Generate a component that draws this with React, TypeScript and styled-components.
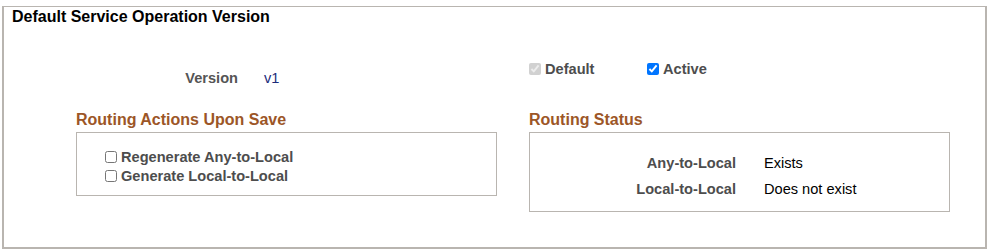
import React from "react";
import styled, { createGlobalStyle } from "styled-components";

const Global = createGlobalStyle`
  html, body { margin: 0; padding: 0; background: #fff; }
  body { font-family: "Liberation Sans", Arial, sans-serif; font-size: 14.6px; color: #000; }
`;

const Frame = styled.section`
  box-sizing: border-box;
  margin: 6px 0 0 2px;
  width: 985px;
  height: 243px;
  border: 1px solid #b9b5b0;
  border-left-width: 2px;
  border-right-width: 2px;
  border-bottom-width: 2px;
  padding: 0 0 0 8px;
`;

const Title = styled.h2`
  margin: 0;
  font-size: 16px;
  font-weight: bold;
  line-height: 20px;
  color: #000;
`;

const Columns = styled.div`
  display: grid;
  grid-template-columns: 421px 421px;
  column-gap: 32px;
  margin-left: 64px;
`;

const TopLeft = styled.div`
  display: flex;
  align-items: center;
  padding-top: 43px;
`;

const FieldLabel = styled.span`
  width: 162px;
  text-align: right;
  font-weight: bold;
  color: #555;
  line-height: 16px;
`;

const FieldValue = styled.span`
  margin-left: 26px;
  color: #1c2b7a;
  line-height: 16px;
`;

const TopRight = styled.div`
  display: flex;
  align-items: center;
  padding-top: 25px;
`;

const CheckLabel = styled.label<{ $width?: number }>`
  display: inline-flex;
  align-items: center;
  font-weight: bold;
  color: #4d4d4d;
  line-height: 16px;
  width: ${(p) => (p.$width ? `${p.$width}px` : "auto")};
`;

const Box = styled.input`
  width: 12px;
  height: 12px;
  margin: 0 4px 0 0;
`;

const Section = styled.div`
  display: flex;
  flex-direction: column;
  padding-top: 25px;
`;

const SectionHeading = styled.h3`
  margin: 0 0 3px 0;
  font-size: 16px;
  line-height: 18px;
  font-weight: bold;
  color: #9c5627;
`;

const Panel = styled.div<{ $height: number }>`
  box-sizing: border-box;
  height: ${(p) => p.$height}px;
  border: 1px solid #b9b5b0;
`;

const ActionList = styled.div`
  display: flex;
  flex-direction: column;
  gap: 3px;
  padding: 16px 0 0 28px;
`;

const StatusGrid = styled.div`
  display: grid;
  grid-template-columns: 206px auto;
  column-gap: 28px;
  row-gap: 10px;
  padding-top: 22px;
`;

const StatusLabel = styled.span`
  text-align: right;
  font-weight: bold;
  color: #4d4d4d;
  line-height: 16px;
`;

const StatusValue = styled.span`
  color: #000;
  line-height: 16px;
`;

export default function App() {
  return (
    <>
      <Global />
      <Frame>
        <Title>Default Service Operation Version</Title>
        <Columns>
          <TopLeft>
            <FieldLabel>Version</FieldLabel>
            <FieldValue>v1</FieldValue>
          </TopLeft>
          <TopRight>
            <CheckLabel $width={118}>
              <Box type="checkbox" checked disabled readOnly />
              Default
            </CheckLabel>
            <CheckLabel>
              <Box type="checkbox" checked readOnly />
              Active
            </CheckLabel>
          </TopRight>
          <Section>
            <SectionHeading>Routing Actions Upon Save</SectionHeading>
            <Panel $height={64}>
              <ActionList>
                <CheckLabel>
                  <Box type="checkbox" />
                  Regenerate Any-to-Local
                </CheckLabel>
                <CheckLabel>
                  <Box type="checkbox" />
                  Generate Local-to-Local
                </CheckLabel>
              </ActionList>
            </Panel>
          </Section>
          <Section>
            <SectionHeading>Routing Status</SectionHeading>
            <Panel $height={80}>
              <StatusGrid>
                <StatusLabel>Any-to-Local</StatusLabel>
                <StatusValue>Exists</StatusValue>
                <StatusLabel>Local-to-Local</StatusLabel>
                <StatusValue>Does not exist</StatusValue>
              </StatusGrid>
            </Panel>
          </Section>
        </Columns>
      </Frame>
    </>
  );
}
